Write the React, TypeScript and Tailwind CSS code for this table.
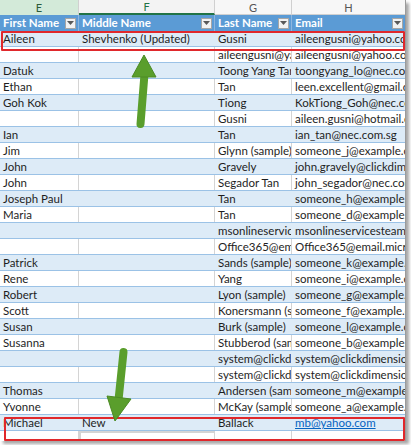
const cols = ["w-[79px]", "w-[136px]", "w-[77px]", "w-[114px]"];

const rows: string[][] = [
  ["Aileen", "Shevhenko (Updated)", "Gusni", "aileengusni@yahoo.com"],
  ["", "", "aileengusni@yahoo.com", "aileengusni@yahoo.com"],
  ["Datuk", "", "Toong Yang Tan", "toongyang_lo@nec.com"],
  ["Ethan", "", "Tan", "leen.excellent@gmail.com"],
  ["Goh Kok", "", "Tiong", "KokTiong_Goh@nec.com"],
  ["", "", "Gusni", "aileen.gusni@hotmail.com"],
  ["Ian", "", "Tan", "ian_tan@nec.com.sg"],
  ["Jim", "", "Glynn (sample)", "someone_j@example.com"],
  ["John", "", "Gravely", "john.gravely@clickdimensions.com"],
  ["John", "", "Segador Tan", "john_segador@nec.com"],
  ["Joseph Paul", "", "Tan", "someone_h@example.com"],
  ["Maria", "", "Tan", "someone_d@example.com"],
  ["", "", "msonlineservicesteam@email.com", "msonlineservicesteam@email.com"],
  ["", "", "Office365@email.microsoft.com", "Office365@email.microsoft.com"],
  ["Patrick", "", "Sands (sample)", "someone_k@example.com"],
  ["Rene", "", "Yang", "someone_i@example.com"],
  ["Robert", "", "Lyon (sample)", "someone_g@example.com"],
  ["Scott", "", "Konersmann (sample)", "someone_f@example.com"],
  ["Susan", "", "Burk (sample)", "someone_l@example.com"],
  ["Susanna", "", "Stubberod (sample)", "someone_b@example.com"],
  ["", "", "system@clickdimensions.com", "system@clickdimensions.com"],
  ["", "", "system@clickdimensions.com", "system@clickdimensions.com"],
  ["Thomas", "", "Andersen (sample)", "someone_m@example.com"],
  ["Yvonne", "", "McKay (sample)", "someone_a@example.com"],
  ["Michael", "New", "Ballack", "mb@yahoo.com"],
  ["", "", "", ""],
];

const letters = ["E", "F", "G", "H"];
const headers = ["First Name", "Middle Name", "Last Name", "Email"];

function FilterButton() {
  return (
    <span className="flex h-[11px] w-[11px] shrink-0 items-center justify-center border border-[#a6a6a6] bg-[#f2f2f2]">
      <svg width="7" height="4" viewBox="0 0 7 4">
        <path d="M0 0h7L3.5 4z" fill="#595959" />
      </svg>
    </span>
  );
}

export default function App() {
  return (
    <div className="h-[445px] w-[411px] bg-white font-['Lato','Liberation_Sans',sans-serif]">
      <div className="relative h-[441px] w-[406px] overflow-hidden border-r border-[#9a9a9a] bg-white shadow-[3px_3px_3px_rgba(0,0,0,0.35)]">
        {/* column letters */}
        <div className="flex h-[15px]">
          {letters.map((l, i) => (
            <div
              key={l}
              className={`${cols[i]} flex shrink-0 items-center justify-center border-r border-[#d0d0d0] text-[11px] leading-none ${
                i === 0
                  ? "bg-[#d3ead9] text-[#2b5b3a]"
                  : i === 1
                  ? "border-b-2 border-b-[#217346] bg-[#f3f3f3] text-[#217346]"
                  : "border-b border-b-[#d0d0d0] bg-[#f7f7f7] text-[#555]"
              }`}
            >
              {l}
            </div>
          ))}
        </div>

        {/* table header */}
        <div className="flex h-[16px] bg-[#5b9bd5]">
          {headers.map((h, i) => (
            <div
              key={h}
              className={`${cols[i]} flex shrink-0 items-center justify-between border-r border-[#8db6e0] pl-[3px] pr-[2px] text-[11.5px] font-bold leading-none text-white`}
            >
              <span className="whitespace-nowrap">{h}</span>
              <FilterButton />
            </div>
          ))}
        </div>

        {/* data rows */}
        {rows.map((r, ri) => {
          const blue = ri % 2 === 0;
          return (
            <div key={ri} className={`flex h-[16px] border-b border-[#9bc2e6] ${blue ? "bg-[#ddebf7]" : "bg-white"}`}>
              {r.map((c, ci) => (
                <div
                  key={ci}
                  className={`${cols[ci]} shrink-0 overflow-hidden whitespace-nowrap border-r px-[3px] text-[11.5px] leading-[15px] ${
                    blue ? "border-[#ddebf7]" : "border-[#d4d4d4]"
                  } ${ri === 25 && ci === 1 ? "border-2 border-[#217346]" : ""} ${
                    ri === 24 && ci === 3 ? "text-[#0563c1] underline" : "text-[#1e1e1e]"
                  }`}
                >
                  {c}
                </div>
              ))}
            </div>
          );
        })}

        {/* highlight boxes */}
        <div className="absolute left-[1px] top-[31px] h-[20px] w-[404px] rounded-[1px] border-2 border-[#e0282c]" />
        <div className="absolute left-[4px] top-[417px] h-[24px] w-[401px] rounded-[1px] border-2 border-[#e0282c]" />

        {/* arrows */}
        <svg className="pointer-events-none absolute left-0 top-0" width="406" height="441" viewBox="0 0 406 441">
          <g fill="#5a9e2c" stroke="#4b8a24" strokeWidth="1">
            <path d="M140.5 124 L144.5 74" stroke="#5a9e2c" strokeWidth="8" strokeLinecap="round" fill="none" />
            <path d="M144 55 L156 77 L132 77 Z" strokeLinejoin="round" />
            <path d="M123.5 352 L118.5 400" stroke="#5a9e2c" strokeWidth="8" strokeLinecap="round" fill="none" />
            <path d="M107 396 L131 399 L115 421 Z" strokeLinejoin="round" />
          </g>
        </svg>
      </div>
    </div>
  );
}
